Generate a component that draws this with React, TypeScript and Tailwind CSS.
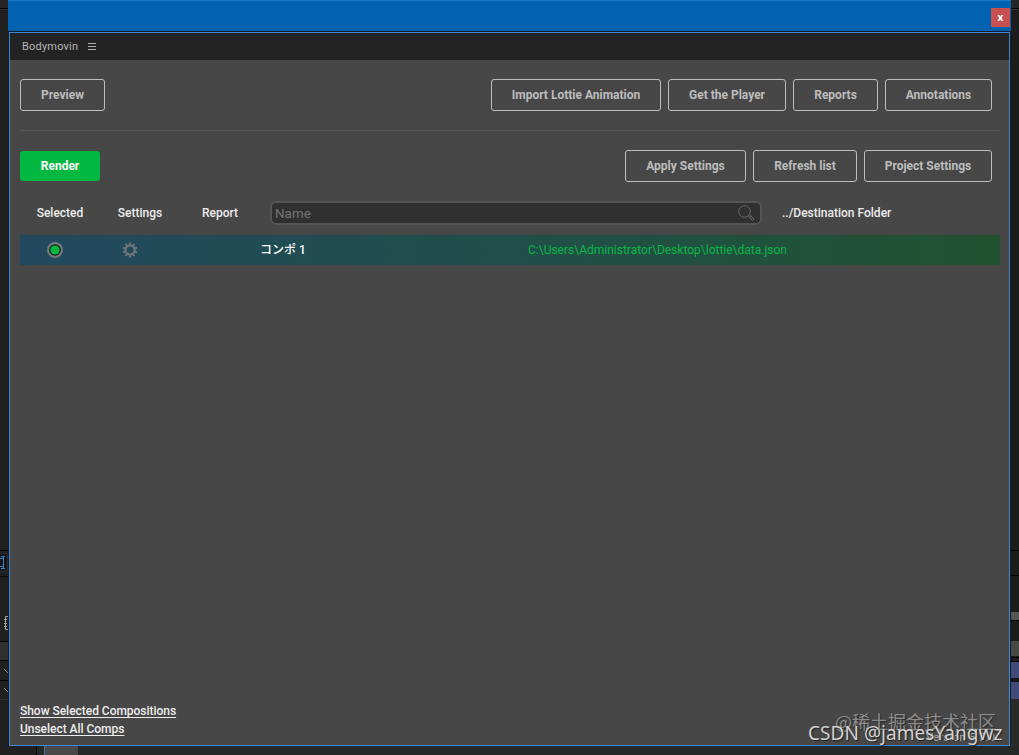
import React from "react";

function OutlineButton({ label, width }: { label: string; width: string }) {
  return (
    <button
      className={`${width} flex h-8 shrink-0 items-center justify-center rounded-[3px] border border-[#bdbdbd] text-[12px] font-bold leading-none whitespace-nowrap text-[#bdbdbd]`}
    >
      {label}
    </button>
  );
}

function Gear() {
  const teeth = [0, 36, 72, 108, 144, 180, 216, 252, 288, 324];
  return (
    <svg className="h-4 w-4" viewBox="0 0 16 16" fill="none" stroke="#747779">
      <circle cx="8" cy="8" r="4.6" strokeWidth="2.2" />
      {teeth.map((a) => (
        <path key={a} d="M8 2.8V.6" strokeWidth="1.9" transform={`rotate(${a} 8 8)`} />
      ))}
    </svg>
  );
}

function LeftStrip() {
  return (
    <div className="flex w-2 shrink-0 flex-col overflow-hidden bg-[#202020]">
      <div className="h-[9px] border-b border-black bg-[#252525]" />
      <div className="h-[541px] border-t border-[#333]" />
      <div className="h-px bg-black" />
      <div className="mt-[2px] h-[19px] rounded-r-sm border border-l-0 border-[#303030] bg-[#151515]">
        <svg className="h-[17px] w-2" viewBox="0 0 8 17" fill="none" stroke="#3583c8">
          <path d="M0 4.5H3M0 12.5H3M3.5 3V14M1 2.5H5M1 14.5H5" />
        </svg>
      </div>
      <div className="mt-1 h-px bg-[#0c0c0c]" />
      <svg className="mt-[38px] h-4 w-2 shrink-0" viewBox="0 0 8 16" fill="none" stroke="#a5a5a5">
        <path d="M8 1.5H5.5V14.5H8M4 4.5H7M4 8.5H7M4 11.5H7" />
      </svg>
      <div className="mt-[10px] h-px bg-black" />
      <div className="h-[18px] bg-[#303030]" />
      <div className="h-px bg-black" />
      <svg className="h-[19px] w-2 shrink-0" viewBox="0 0 8 19" fill="none" stroke="#8a8a8a">
        <path d="M4 8L8 12" />
      </svg>
      <div className="h-px bg-black" />
      <svg className="h-[18px] w-2 shrink-0" viewBox="0 0 8 18" fill="none" stroke="#8a8a8a">
        <path d="M4 7L8 11" />
      </svg>
      <div className="h-px bg-[#303030]" />
    </div>
  );
}

function RightStrip() {
  return (
    <div className="flex w-2 shrink-0 flex-col overflow-hidden bg-[#1c1c1c]">
      <div className="h-[9px] border-b border-black bg-[#252525]" />
      <div className="h-[541px] border-t border-[#333]" />
      <div className="h-px bg-black" />
      <div className="mt-6 h-px bg-black" />
      <div className="mt-9 h-2 bg-[#555]" />
      <div className="h-px bg-black" />
      <div className="mt-5 h-[15px] bg-[#484844]" />
      <div className="mt-px h-[5px] border-y border-black" />
      <div className="h-4 bg-[#424a7c]" />
      <div className="h-1 bg-[#171717]" />
      <div className="h-[17px] bg-[#424a7c]" />
      <div className="flex-1 bg-[#292929]" />
    </div>
  );
}

export default function App() {
  return (
    <div
      className="relative flex h-[755px] w-[1019px] flex-col overflow-hidden bg-[#202020] text-[12px] leading-none text-[#ededed]"
      style={{ fontFamily: 'Roboto, "Noto Sans CJK JP", sans-serif' }}
    >
      <div className="flex h-[746px] shrink-0">
        <LeftStrip />
        <div className="flex w-[1003px] flex-col bg-[#101b27]">
          <header className="flex h-[31px] shrink-0 justify-end border-t border-[#1979c5] bg-[#0062b1] pt-[7px] pr-px">
            <button
              className="flex h-[19px] w-[19px] items-center justify-center bg-[#c75050] pb-px text-[10px] font-bold leading-none text-white"
              style={{ fontFamily: '"Open Sans", sans-serif' }}
            >
              x
            </button>
          </header>
          <main className="mx-px mt-px flex min-h-0 flex-1 flex-col border border-[#3d87d3] bg-[#474747]">
            <div className="flex h-[27px] shrink-0 items-center bg-[#232323] pl-3 text-[11px] tracking-[0.2px] text-[#b5b5b5]">
              <span className="w-[66px]">Bodymovin</span>
              <span className="flex flex-col gap-[2px]">
                <i className="h-px w-2 bg-[#b0b0b0]" />
                <i className="h-px w-2 bg-[#b0b0b0]" />
                <i className="h-px w-2 bg-[#b0b0b0]" />
              </span>
            </div>
            <div className="mr-[9px] ml-[10px] flex min-h-0 flex-1 flex-col">
              <nav className="flex h-[71px] shrink-0 gap-[7px] border-b border-[#575757] pt-[19px] pr-2">
                <OutlineButton label="Preview" width="w-[85px]" />
                <span className="flex-1" />
                <OutlineButton label="Import Lottie Animation" width="w-[170px]" />
                <OutlineButton label="Get the Player" width="w-[118px]" />
                <OutlineButton label="Reports" width="w-[85px]" />
                <OutlineButton label="Annotations" width="w-[107px]" />
              </nav>
              <div className="flex h-[51px] shrink-0 gap-[7px] pt-[19px] pr-2">
                <button className="mt-px h-[30px] w-20 rounded-[3px] bg-[#00b840] text-[12px] font-bold text-white">
                  Render
                </button>
                <span className="flex-1" />
                <OutlineButton label="Apply Settings" width="w-[121px]" />
                <OutlineButton label="Refresh list" width="w-[104px]" />
                <OutlineButton label="Project Settings" width="w-[128px]" />
              </div>
              <div className="mt-[19px] flex h-6 shrink-0 items-center font-medium">
                <span className="w-20 text-center">Selected</span>
                <span className="w-20 text-center">Settings</span>
                <span className="w-20 text-center">Report</span>
                <div className="ml-[10px] flex h-6 w-[492px] items-center justify-between rounded-md border-2 border-[#555] bg-[#303030] pr-[5px] pl-[3px]">
                  <span className="pt-px text-[13.3px] font-normal tracking-[0.1px] text-[#757575]">Name</span>
                  <svg className="h-[18px] w-[18px]" viewBox="0 0 18 18" fill="none" stroke="#6b6b6b">
                    <circle cx="7.5" cy="7.5" r="5.8" />
                    <path d="M11.5 12L15.5 16.5L17 15L12.5 11M13 13L14.5 12" />
                  </svg>
                </div>
                <span className="ml-5">../Destination Folder</span>
              </div>
              <div className="mt-[10px] flex h-[30px] shrink-0 items-center bg-linear-to-r from-[#22495f] to-[#215330]">
                <div className="flex w-[70px] justify-center">
                  <svg className="h-4 w-4" viewBox="0 0 16 16">
                    <circle cx="8" cy="8" r="8" fill="#74777a" />
                    <circle cx="8" cy="8" r="5.8" fill="#092018" />
                    <circle cx="8" cy="8" r="4.6" fill="#00b840" />
                  </svg>
                </div>
                <div className="flex w-20 justify-center">
                  <Gear />
                </div>
                <span className="ml-[90px] w-[268px] font-medium text-white">コンポ 1</span>
                <span className="text-[#08b745]">C:\Users\Administrator\Desktop\lottie\data.json</span>
              </div>
              <footer className="mt-auto mb-[7px] flex flex-col items-start font-medium tracking-[-0.03px]">
                <a className="h-[18px] leading-[18px] underline underline-offset-2">Show Selected Compositions</a>
                <a className="h-[18px] leading-[18px] underline underline-offset-2">Unselect All Comps</a>
              </footer>
            </div>
          </main>
        </div>
        <RightStrip />
      </div>
      <div className="flex h-[9px] shrink-0 bg-[#242928]">
        <div className="w-9 bg-[#202020]" />
        <div className="w-px bg-black" />
        <div className="w-[7px]" />
        <div className="w-px bg-[#3979b9]" />
        <div className="w-[33px] bg-[#484848]" />
      </div>
      <span className="absolute top-[732px] left-[926px] text-[11px] leading-none tracking-[0.4px] text-[#b0b0b0]">Version 5.7.0</span>
      <span
        className="absolute top-[710px] left-[835px] text-[18px] leading-[22px] whitespace-nowrap text-[#8d8d8d]"
        style={{ fontFamily: '"Noto Sans CJK SC", sans-serif', textShadow: "1px 1px 1px #292929" }}
      >
        @稀土掘金技术社区
      </span>
      <span
        className="absolute top-[721px] left-[808px] text-[19px] leading-6 tracking-[0.05px] whitespace-nowrap text-[#d2d2d2]"
        style={{ fontFamily: '"Noto Sans", sans-serif', textShadow: "1px 1px 1px #222" }}
      >
        CSDN @jamesYangwz
      </span>
    </div>
  );
}
